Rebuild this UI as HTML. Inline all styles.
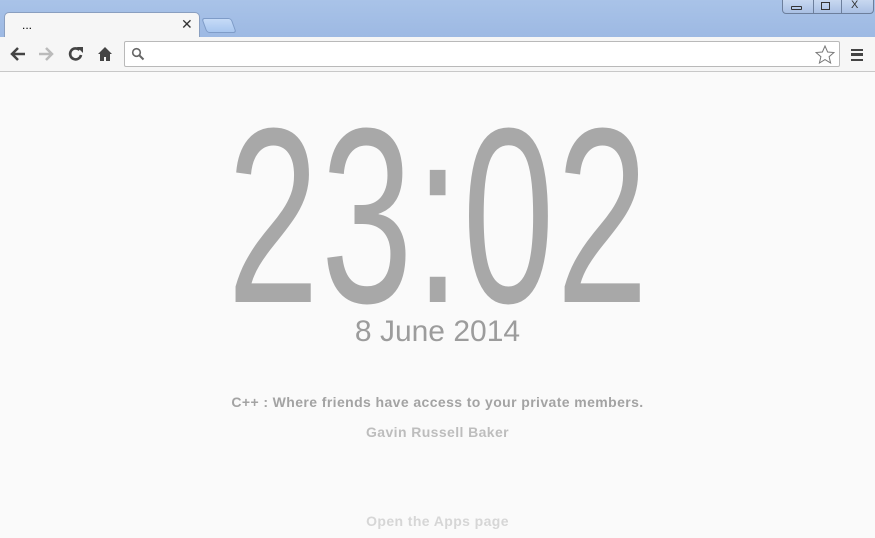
<!DOCTYPE html>
<html><head><style>
*{margin:0;padding:0;box-sizing:border-box}
body{width:875px;height:538px;overflow:hidden;background:#fafafa;font-family:"Liberation Sans",sans-serif;position:relative}
.top{position:absolute;left:0;top:0;width:875px;height:37px;background:linear-gradient(#a9c3e8,#9db9e3)}
.tab{position:absolute;left:4px;top:12px;width:196px;height:26px;background:#f6f6f6;border:1px solid #8a9fc0;border-bottom:none;border-radius:5px 5px 0 0;}
.tabt{position:absolute;left:22px;top:18px;font-size:12px;color:#000}
.tabx{position:absolute;left:181px;top:16px;font-size:14px;color:#333}
.ntab{position:absolute;left:204px;top:18px;width:30px;height:15px;background:linear-gradient(#c6dbf7,#a8c6ef);border:1px solid #7f9cc8;border-radius:3px;transform:skewX(20deg)}
.wc{position:absolute;left:782px;top:-1px;width:92px;height:15px;border:1px solid #6d7f9c;border-radius:0 0 4px 4px;background:linear-gradient(#c8d8f0,#a9c0e4)}
.wc div{position:absolute;top:0;height:13px;border-left:1px solid #6d7f9c}
.bar{position:absolute;left:0;top:37px;width:875px;height:35px;background:#f6f6f6;border-bottom:1px solid #c8c8c8}
.omni{position:absolute;left:124px;top:4px;width:716px;height:26px;background:#fff;border:1px solid #b9b9b9;border-radius:2px}
.ic{position:absolute;top:8px}
.clock{position:absolute;left:0;top:91px;width:875px;text-align:center;font-size:250px;color:#a8a8a8;line-height:250px;transform:scaleX(0.66);transform-origin:438px 0;letter-spacing:3px;text-indent:3px}
.c{position:absolute;left:0;width:875px;text-align:center}
</style></head><body>
<div class="top"></div>
<div class="tab"></div>
<div class="tabt">...</div>
<div class="tabx">✕</div>
<div class="ntab"></div>
<div class="wc"><div style="left:30px"></div><div style="left:58px"></div>
<span style="position:absolute;left:8px;top:6px;width:11px;height:4px;border:1px solid #333;border-radius:1px"></span>
<span style="position:absolute;left:38px;top:2px;width:9px;height:8px;border:1px solid #333"></span>
<span style="position:absolute;left:68px;top:-1px;font-size:11px;color:#333">X</span></div>
<div class="bar">
<svg class="ic" style="left:9px" width="18" height="18" viewBox="0 0 18 18"><path d="M16 9H4M9 3L3 9l6 6" stroke="#444" stroke-width="2.5" fill="none"/></svg>
<svg class="ic" style="left:37px" width="18" height="18" viewBox="0 0 18 18"><path d="M2 9h12M9 3l6 6-6 6" stroke="#bbb" stroke-width="2.5" fill="none"/></svg>
<svg class="ic" style="left:67px" width="18" height="18" viewBox="0 0 18 18"><path d="M14 10a5.5 5.5 0 1 1-1.5-5" stroke="#444" stroke-width="2.6" fill="none"/><path d="M10 2h6v6z" fill="#444"/></svg>
<svg class="ic" style="left:96px" width="18" height="18" viewBox="0 0 18 18"><path d="M9 2L2 9h2v7h4v-4h2v4h4V9h2z" fill="#444"/></svg>
<div class="omni">
<svg style="position:absolute;left:6px;top:5px" width="14" height="14" viewBox="0 0 14 14"><circle cx="5.5" cy="5.5" r="3.8" stroke="#666" stroke-width="1.6" fill="none"/><path d="M8.5 8.5l4 4" stroke="#666" stroke-width="2"/></svg>
<svg style="position:absolute;left:690px;top:3px" width="20" height="19" viewBox="0 0 20 19"><path d="M10 1l2.6 6 6.4.5-4.9 4.2 1.5 6.3L10 14.6 4.4 18l1.5-6.3L1 7.5l6.4-.5z" stroke="#777" fill="none"/></svg>
</div>
<div style="position:absolute;left:851px;top:12px;width:12px;height:12px;border-top:2.5px solid #444;border-bottom:2.5px solid #444"><div style="margin-top:2.3px;height:2.5px;background:#444"></div></div>
</div>
<div class="clock">23:02</div>
<div class="c" style="top:315px;font-size:30px;color:#9c9c9c">8 June 2014</div>
<div class="c" style="top:394px;font-size:14px;letter-spacing:0.4px;font-weight:bold;color:#a3a3a3">C++ : Where friends have access to your private members.</div>
<div class="c" style="top:424px;font-size:14px;letter-spacing:0.4px;font-weight:bold;color:#bdbdbd">Gavin Russell Baker</div>
<div class="c" style="top:513px;font-size:14px;letter-spacing:0.4px;font-weight:bold;color:#d6d6d6">Open the Apps page</div>
</body></html>
